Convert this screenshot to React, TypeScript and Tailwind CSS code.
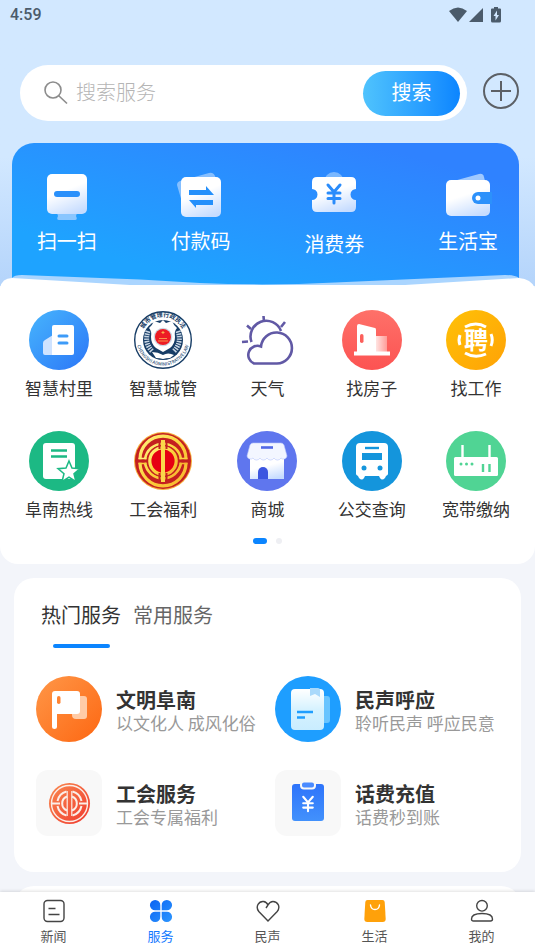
import React from 'react';

type IconProps = { className?: string };

function Yuan({ color, width = 3 }: { color: string; width?: number }) {
  return (
    <path
      d="M-6 -9 L0 -2 L6 -9 M0 -2 V9 M-6 -1 H6 M-6 4.5 H6"
      fill="none"
      stroke={color}
      strokeWidth={width}
      strokeLinecap="round"
    />
  );
}

function Gradients() {
  return (
    <svg className="absolute size-0" aria-hidden="true">
      <defs>
        <linearGradient id="paper" x1="0.3" y1="0" x2="0.7" y2="1">
          <stop offset="0.4" stopColor="#fff" />
          <stop offset="1" stopColor="#c6dcff" />
        </linearGradient>
        <linearGradient id="village" x1="0" y1="0" x2="1" y2="1">
          <stop stopColor="#47b5fd" />
          <stop offset="1" stopColor="#2b76f7" />
        </linearGradient>
        <linearGradient id="coral" x1="0" y1="0" x2="0" y2="1">
          <stop stopColor="#fe7169" />
          <stop offset="1" stopColor="#fc5352" />
        </linearGradient>
        <linearGradient id="amber" x1="0" y1="0" x2="1" y2="1">
          <stop stopColor="#ffc107" />
          <stop offset="1" stopColor="#ffa206" />
        </linearGradient>
        <linearGradient id="flag" x1="0" y1="0" x2="1" y2="1">
          <stop stopColor="#ff9748" />
          <stop offset="1" stopColor="#fd6712" />
        </linearGradient>
        <linearGradient id="note" x1="0" y1="0" x2="0" y2="1">
          <stop stopColor="#fff" />
          <stop offset="0.5" stopColor="#d6f2ff" />
          <stop offset="1" stopColor="#c9edff" />
        </linearGradient>
        <linearGradient id="gold" x1="0" y1="0" x2="1" y2="1">
          <stop stopColor="#fff27c" />
          <stop offset="0.5" stopColor="#fbd23c" />
          <stop offset="1" stopColor="#f7b52f" />
        </linearGradient>
        <linearGradient id="vermilion" x1="0" y1="0" x2="1" y2="1">
          <stop stopColor="#f98a4f" />
          <stop offset="1" stopColor="#f0392f" />
        </linearGradient>
        <linearGradient id="clip" x1="0" y1="0" x2="0" y2="1">
          <stop stopColor="#2e74fb" />
          <stop offset="1" stopColor="#4291fc" />
        </linearGradient>
        <linearGradient id="clover" x1="0" y1="0" x2="1" y2="1">
          <stop stopColor="#0a63f3" />
          <stop offset="1" stopColor="#2d96ff" />
        </linearGradient>
        <linearGradient id="annex" x1="0" y1="0" x2="1" y2="0">
          <stop stopColor="#ffe4e2" />
          <stop offset="1" stopColor="#ff9c98" />
        </linearGradient>
      </defs>
    </svg>
  );
}

function ScanIcon({ className }: IconProps) {
  return (
    <svg className={className} viewBox="0 0 48 52" aria-hidden="true">
      <path d="M14 43h20l-1 3q2 4-1 4H16q-3 0-1-4z" fill="#a5cfff" opacity=".8" />
      <rect x="4" y="4" width="40" height="40" rx="5" fill="url(#paper)" />
      <rect x="11" y="21" width="26" height="6" rx="3" fill="#2a90fb" />
    </svg>
  );
}

function PayIcon({ className }: IconProps) {
  return (
    <svg className={className} viewBox="0 0 48 52" aria-hidden="true">
      <path d="M3 11 L32 3 q4-1 6 3 l4 10-32 26q-3 0-3-3L0 15q0-3 3-4z" fill="#9dcaff" opacity=".8" />
      <rect x="4" y="7" width="40" height="40" rx="5" fill="url(#paper)" />
      <path d="M12 20h17v-4l8 9H12zM36 30H12l7 8v-3h17z" fill="#2590fb" />
    </svg>
  );
}

function TicketIcon({ className }: IconProps) {
  return (
    <svg className={className} viewBox="0 0 48 55" aria-hidden="true">
      <circle cx="24" cy="12" r="10" fill="#8fc3ff" opacity=".8" />
      <path
        d="M7 7h34q5 0 5 5v7a5 5 0 0 0 0 11v7q0 5-5 5H7q-5 0-5-5v-7a5 5 0 0 0 0-11v-7q0-5 5-5z"
        fill="url(#paper)"
      />
      <g transform="translate(24 24)">
        <Yuan color="#2a8cfb" />
      </g>
    </svg>
  );
}

function WalletIcon({ className }: IconProps) {
  return (
    <svg className={className} viewBox="0 0 48 52" aria-hidden="true">
      <path d="M6 12 35 4q4-1 5 3l2 8z" fill="#acd0ff" opacity=".9" />
      <rect x="2" y="10" width="44" height="36" rx="5" fill="url(#paper)" />
      <path d="M48 22H34a6 6 0 0 0 0 12h14z" fill="#2c91fb" />
      <circle cx="34" cy="28" r="2.500" fill="#fff" />
    </svg>
  );
}

function VillageIcon({ className }: IconProps) {
  return (
    <svg className={className} viewBox="0 0 60 60" aria-hidden="true">
      <circle cx="30" cy="30" r="30" fill="url(#village)" />
      <path d="M14 33q0-2 2-3l8-5v20h-8q-2 0-2-2z" fill="#cfe3ff" />
      <path d="M23 17q0-2 2-2h18q2 0 2 2v26q0 2-2 2H23z" fill="#fff" />
      <path d="M30 26h8M30 33h8" stroke="#3d9bf8" strokeWidth="3" strokeLinecap="round" />
    </svg>
  );
}

function CityEmblem({ className }: IconProps) {
  return (
    <svg className={className} viewBox="0 0 60 60" aria-hidden="true">
      <defs>
        <path id="ring-top" d="M9 33a21.500 21.500 0 1 1 42 0" />
        <path id="ring-bottom" d="M4 24a26.500 26.500 0 1 0 52 0" />
      </defs>
      <circle cx="30" cy="30" r="28.300" fill="#fff" stroke="#173d66" strokeWidth="1.400" />
      <circle cx="30" cy="30" r="20" fill="#173d66" />
      <text fontSize="6" fontWeight="700" fill="#173d66">
        <textPath href="#ring-top" startOffset="50%" textAnchor="middle">城市管理行政执法</textPath>
      </text>
      <text fontSize="4.500" fontWeight="500" fill="#31547a">
        <textPath href="#ring-bottom" startOffset="50%" textAnchor="middle">
          CHENGSHI ADMINISTRATIVE LAW
        </textPath>
      </text>
      <path
        d="M15 21q-4 12 4 20M45 21q4 12-4 20"
        fill="none"
        stroke="#c9d6e4"
        strokeWidth="5"
        strokeDasharray="1.500 1"
      />
      <path
        d="M30 10l3 3 6-2q2 5 5 7-3 3-2 9 0 7-5 11l-7 4-7-4q-5-4-5-11 1-6-2-9 3-2 5-7l6 2z"
        fill="#fff"
      />
      <circle cx="30" cy="27" r="9.300" fill="#ccd7e3" />
      <circle cx="30" cy="27" r="8" fill="#ed1c24" />
      <path d="M26 28.500h8M25 31h10" stroke="#f8944a" strokeWidth="1" />
      <path d="M30 21v3M28.500 22.500h3" stroke="#f8b04a" strokeWidth="1" />
      <path d="M19 42q6 0 11 3 5-3 11 0l-4 3q-4 0-7 1-3-1-7-1z" fill="#fff" />
    </svg>
  );
}

function WeatherIcon({ className }: IconProps) {
  return (
    <svg className={className} viewBox="0 0 60 60" aria-hidden="true">
      <g fill="none" stroke="#6159a5" strokeWidth="2.600">
        <path d="M14.500 32a15.500 15.500 0 0 1 29.500-11" />
        <path d="M17 53.500a9 9 0 1 1 7-17A15.500 15.500 0 1 1 40 53.500z" />
        <path d="M26.500 6l.5 6M10 15.500l4 3.500M48 12l-4 5M5 32l6-.5" />
      </g>
    </svg>
  );
}

function HouseIcon({ className }: IconProps) {
  return (
    <svg className={className} viewBox="0 0 60 60" aria-hidden="true">
      <circle cx="30" cy="30" r="30" fill="url(#coral)" />
      <path d="M34 26h11v17H34z" fill="url(#annex)" />
      <path d="M15 16q0-2 2-2l16 4q1 0 1 2v22H15z" fill="#fff" />
      <rect x="18" y="24" width="3.500" height="9" rx="1.750" fill="#fc5f5b" />
      <path d="M12 43.500h36" stroke="#fff" strokeWidth="4" />
    </svg>
  );
}

function JobIcon({ className }: IconProps) {
  return (
    <svg className={className} viewBox="0 0 60 60" aria-hidden="true">
      <circle cx="30" cy="30" r="30" fill="url(#amber)" />
      <g fill="none" stroke="#fff" strokeWidth="3">
        <path d="M19 17q11-6 21 0M19 43q10 6 21 1M14 25q-2 5 0 10M45 24q2.500 6 0 12" />
      </g>
      <text x="30" y="38.500" fontSize="24" fontWeight="700" fill="#fff" textAnchor="middle">聘</text>
    </svg>
  );
}

function HotlineIcon({ className }: IconProps) {
  return (
    <svg className={className} viewBox="0 0 60 60" aria-hidden="true">
      <circle cx="30" cy="30" r="30" fill="#1cb984" />
      <rect x="14" y="12" width="32" height="36" rx="3" fill="#fff" />
      <path d="M22 19.500h16M22 25.500h16" stroke="#1cb984" strokeWidth="2.600" />
      <path
        d="M40 30l3 7 8 .7-6 5 2 8-7-4.500-7 4.500 2-8-6-5 8-.7z"
        fill="#fff"
        stroke="#1cb984"
        strokeWidth="1.500"
      />
    </svg>
  );
}

function UnionEmblem({ className }: IconProps) {
  return (
    <svg className={className} viewBox="0 0 60 60" aria-hidden="true">
      <circle cx="30" cy="30" r="29" fill="#f6ad3b" />
      <circle cx="30" cy="30" r="28" fill="#c42020" />
      <g fill="none" stroke="url(#gold)">
        <path d="M7 28.200a23 23 0 0 1 46 0M7 31.800a23 23 0 0 0 46 0" strokeWidth="3.200" />
        <path d="M12 28.200a18.200 18.200 0 0 1 36 0M12 31.800a18.200 18.200 0 0 0 36 0" strokeWidth="2.600" />
        <path d="M5.500 27.500h8M46.500 27.500h8M5.500 32.500h8M46.500 32.500h8" strokeWidth="1.600" />
      </g>
      <circle cx="30" cy="30" r="16" fill="#c42020" />
      <circle cx="30" cy="30" r="13.200" fill="#e60012" stroke="url(#gold)" strokeWidth="3.200" />
      <path d="M26.500 10v8M33.500 10v8M26.500 42v8M33.500 42v8" stroke="#c42020" strokeWidth="2" />
      <rect x="28" y="9" width="4" height="42" fill="#fbd84a" />
    </svg>
  );
}

function ShopIcon({ className }: IconProps) {
  return (
    <svg className={className} viewBox="0 0 60 60" aria-hidden="true">
      <circle cx="30" cy="30" r="30" fill="#5f76ee" />
      <path d="M13 26h34v22H13z" fill="url(#paper)" />
      <path
        d="M16 12h28q2 0 3 2l3 11a3.500 3.500 0 0 1-6 2 4 4 0 0 1-7 0 4 4 0 0 1-7 0 4 4 0 0 1-7 0 4 4 0 0 1-7 0 3.500 3.500 0 0 1-6-2l3-11q1-2 3-2z"
        fill="#f3f6ff"
        stroke="#b9c6fb"
        strokeWidth=".6"
      />
      <path d="M24 16.500h12" stroke="#5168e6" strokeWidth="2.600" />
      <path d="M21 48v-7a5 5 0 0 1 10 0v7z" fill="#3c56e0" />
    </svg>
  );
}

function BusIcon({ className }: IconProps) {
  return (
    <svg className={className} viewBox="0 0 60 60" aria-hidden="true">
      <circle cx="30" cy="30" r="30" fill="#1495dc" />
      <path
        d="M18 12h24q4 0 4 4v27q0 1-2 2l-1 2q-3 3-5 0l-1-2H23l-1 2q-2 3-5 0l-1-2q-2-1-2-2V16q0-4 4-4z"
        fill="#fff"
      />
      <path d="M23 17h14" stroke="#1495dc" strokeWidth="2.400" />
      <path d="M20 22h20v7H20z" fill="#1495dc" />
      <circle cx="22" cy="37" r="2.500" fill="#1495dc" />
      <circle cx="38" cy="37" r="2.500" fill="#1495dc" />
    </svg>
  );
}

function RouterIcon({ className }: IconProps) {
  return (
    <svg className={className} viewBox="0 0 60 60" aria-hidden="true">
      <circle cx="30" cy="30" r="30" fill="#50d494" />
      <path d="M16.500 14v13M43.500 14v13" stroke="#fff" strokeWidth="2.400" />
      <rect x="8" y="26" width="44" height="19" rx="1.500" fill="#fff" />
      <circle cx="15" cy="33" r="1.500" fill="#50d494" />
      <circle cx="20.500" cy="33" r="1.500" fill="#50d494" />
      <circle cx="26" cy="33" r="1.500" fill="#50d494" />
      <path d="M37 33v8M43.500 33v8" stroke="#50d494" strokeWidth="2.400" />
    </svg>
  );
}

function FlagIcon({ className }: IconProps) {
  return (
    <svg className={className} viewBox="0 0 66 66" aria-hidden="true">
      <circle cx="33" cy="33" r="33" fill="url(#flag)" />
      <path d="M36 20h12q3 0 3 3v17q0 3-3 3H40q-4 0-4-4z" fill="#ffcba6" />
      <path d="M16 18q0-3 3-3h22q3 0 3 3v17q0 3-3 3H21v13q0 2-2.500 2T16 51z" fill="#fff" />
      <rect x="21" y="20" width="3.500" height="8" rx="1.750" fill="#ff8433" />
    </svg>
  );
}

function VoiceIcon({ className }: IconProps) {
  return (
    <svg className={className} viewBox="0 0 66 66" aria-hidden="true">
      <circle cx="33" cy="33" r="33" fill="#1e9eff" />
      <path d="M44 20h8q3 0 3 3v21q0 3-3 3h-8z" fill="#68c4ff" />
      <rect x="16" y="13" width="33" height="41" rx="4" fill="url(#note)" />
      <path d="M35 12h8q2 0 2 2v7l-5-3-5 2z" fill="#a9d9fb" />
      <path d="M22 36h16M22 41.500h8" stroke="#1e9eff" strokeWidth="2.400" />
    </svg>
  );
}

function UnionTile({ className }: IconProps) {
  return (
    <svg className={className} viewBox="0 0 66 66" aria-hidden="true">
      <rect width="66" height="66" rx="12" fill="#f8f8f8" />
      <circle cx="33.500" cy="33.500" r="20.500" fill="url(#vermilion)" />
      <g fill="none" stroke="#fbeee8">
        <circle cx="33.500" cy="33.500" r="18" strokeWidth="1.400" />
        <path d="M21.500 31a12.500 12.500 0 0 1 9-9.500M36.500 21.500a12.500 12.500 0 0 1 9 9.500M21.500 36a12.500 12.500 0 0 0 9 9.500M36.500 45.500a12.500 12.500 0 0 0 9-9.500" strokeWidth="2" />
        <path d="M15 33.500h9M43 33.500h9" strokeWidth="1.800" />
        <path d="M31 26.500a7.500 7.500 0 0 0 0 14M36 26.500a7.500 7.500 0 0 1 0 14" strokeWidth="2" />
        <path d="M31.200 21v25M35.800 21v25" strokeWidth="1.200" />
      </g>
    </svg>
  );
}

function TopUpTile({ className }: IconProps) {
  return (
    <svg className={className} viewBox="0 0 66 66" aria-hidden="true">
      <rect width="66" height="66" rx="12" fill="#f8f8f8" />
      <rect x="17" y="14" width="32" height="37" rx="3" fill="url(#clip)" />
      <rect x="26" y="11.500" width="14" height="7" rx="3" fill="#4a8bff" stroke="#f8f8f8" strokeWidth="2" />
      <g transform="translate(33 34) scale(.8)">
        <Yuan color="#fff" width={2.6} />
      </g>
    </svg>
  );
}

function NewsIcon({ className }: IconProps) {
  return (
    <svg className={className} viewBox="0 0 24 24" fill="none" stroke="#444" strokeWidth="1.400" aria-hidden="true">
      <rect x="2" y="1.500" width="20" height="21" rx="3.500" />
      <path d="M6.500 9.500h7M6.500 15.500h11" />
    </svg>
  );
}

function CloverIcon({ className }: IconProps) {
  return (
    <svg className={className} viewBox="0 0 24 24" fill="url(#clover)" aria-hidden="true">
      <path d="M11.300 11.300H6.500a5.200 5.200 0 1 1 4.800-4.800zM12.700 11.300V6.500a5.200 5.200 0 1 1 4.800 4.800zM11.300 12.700v4.800a5.200 5.200 0 1 1-4.800-4.800zM12.700 12.700h4.800a5.200 5.200 0 1 1-4.800 4.800z" />
    </svg>
  );
}

function HeartIcon({ className }: IconProps) {
  return (
    <svg className={className} viewBox="0 0 24 24" fill="none" stroke="#444" strokeWidth="1.400" aria-hidden="true">
      <path d="M12 22 2.800 12.500C-1 7.500 3 2 7.500 2.500q3 .3 4.500 3.500 2-3.500 5-3.500c4.500 0 8 5 4.200 10zM12 6l-2 3" />
    </svg>
  );
}

function BagIcon({ className }: IconProps) {
  return (
    <svg className={className} viewBox="0 0 24 24" aria-hidden="true">
      <path d="M4.500 1h15q2 0 2.200 2l1 17q0 3-3 3H4.300q-3 0-3-3l1-17q.2-2 2.200-2z" fill="#ffa10a" />
      <path d="M7.500 6q.5 4.500 4.500 4.500T16.500 6" fill="none" stroke="#fff" strokeWidth="1.400" strokeLinecap="round" />
    </svg>
  );
}

function PersonIcon({ className }: IconProps) {
  return (
    <svg className={className} viewBox="0 0 24 24" fill="none" stroke="#444" strokeWidth="1.400" aria-hidden="true">
      <circle cx="12" cy="6.800" r="5.300" />
      <path d="M1.500 20c0-4 4.500-5.500 10.500-5.500S22.500 16 22.500 20q0 2-2 2h-17q-2 0-2-2z" />
    </svg>
  );
}

const shortcuts = [
  { label: '扫一扫', Icon: ScanIcon, size: 'h-[52px]' },
  { label: '付款码', Icon: PayIcon, size: 'h-[52px]' },
  { label: '消费券', Icon: TicketIcon, size: 'h-[55px]' },
  { label: '生活宝', Icon: WalletIcon, size: 'h-[52px]' },
];

const services = [
  { label: '智慧村里', Icon: VillageIcon },
  { label: '智慧城管', Icon: CityEmblem },
  { label: '天气', Icon: WeatherIcon },
  { label: '找房子', Icon: HouseIcon },
  { label: '找工作', Icon: JobIcon },
  { label: '阜南热线', Icon: HotlineIcon },
  { label: '工会福利', Icon: UnionEmblem },
  { label: '商城', Icon: ShopIcon },
  { label: '公交查询', Icon: BusIcon },
  { label: '宽带缴纳', Icon: RouterIcon },
];

const popular = [
  { title: '文明阜南', note: '以文化人 成风化俗', Icon: FlagIcon },
  { title: '民声呼应', note: '聆听民声 呼应民意', Icon: VoiceIcon },
  { title: '工会服务', note: '工会专属福利', Icon: UnionTile },
  { title: '话费充值', note: '话费秒到账', Icon: TopUpTile },
];

const tabs = [
  { label: '新闻', Icon: NewsIcon },
  { label: '服务', Icon: CloverIcon, active: true },
  { label: '民声', Icon: HeartIcon },
  { label: '生活', Icon: BagIcon },
  { label: '我的', Icon: PersonIcon },
];

function StatusBar() {
  return (
    <div className="flex h-[30px] items-center justify-between pr-8 pl-[10px] text-[#4b5b6b]">
      <span className="font-['Roboto',sans-serif] text-base font-medium">4:59</span>
      <svg className="h-4 w-[54px]" viewBox="0 0 54 16" fill="currentColor" aria-hidden="true">
        <path d="M0 4Q9 -3 18 4L9 15z" />
        <path d="M34 1v14H20z" />
        <path d="M45 0h4v1.500h2q1 0 1 1V14q0 1.500-1.500 1.500h-7Q42 15.500 42 14V2.500q0-1 1-1h2z" />
        <path d="M48 3.500 44.500 9H46.500v4.500L50 8h-2z" fill="#d2e8ff" />
      </svg>
    </div>
  );
}

function SearchRow() {
  return (
    <div className="mt-[35px] flex items-center gap-4 pr-4 pl-5">
      <form
        className="flex h-14 min-w-0 flex-1 items-center rounded-full bg-white pr-[7px] pl-6"
        onSubmit={(e) => e.preventDefault()}
      >
        <svg className="size-6 shrink-0" viewBox="0 0 24 24" fill="none" stroke="#8c8c8c" strokeWidth="1.600" aria-hidden="true">
          <circle cx="9" cy="9" r="8" />
          <path d="M14.500 14.500 23 22.500" />
        </svg>
        <input
          type="search"
          aria-label="搜索服务"
          placeholder="搜索服务"
          className="ml-2 h-9 min-w-0 flex-1 bg-transparent pb-1 text-xl font-light outline-none placeholder:text-[#b5b5b5]"
        />
        <button
          type="submit"
          className="h-[45px] w-[97px] rounded-full bg-linear-to-r from-[#4fc3fd] to-[#0b85ff] pb-[2px] text-xl text-white"
        >
          搜索
        </button>
      </form>
      <button type="button" aria-label="添加" className="-mt-1 shrink-0">
        <svg className="size-9" viewBox="0 0 36 36" fill="none" stroke="#5c6066" strokeWidth="2" aria-hidden="true">
          <circle cx="18" cy="18" r="17" />
          <path d="M18 8v20M8 18h20" />
        </svg>
      </button>
    </div>
  );
}

function Shortcuts() {
  return (
    <div className="mt-[22px] mr-4 ml-3 h-[143px] rounded-t-[22px] bg-linear-to-tr from-[#1ea3ff] from-20% to-[#2f82ff] to-85% pt-[27px]">
      <div className="-mr-4 -ml-3 grid grid-cols-4">
        {shortcuts.map(({ label, Icon, size }) => (
          <button key={label} type="button" className="flex flex-col items-center self-start">
            <Icon className={`${size} w-12`} />
            <span className="mt-1 text-xl leading-[30px] text-white">{label}</span>
          </button>
        ))}
      </div>
    </div>
  );
}

function Services() {
  return (
    <section className="-mt-[11px]">
      <svg className="relative block h-[13px] w-full" viewBox="0 0 535 13" preserveAspectRatio="none" aria-hidden="true">
        <path d="M12 3Q14 0 22 0L140 4.500 200 8q67 3 135-.5L505 0q10 0 14 3V13H12z" fill="#aad5ff" />
        <path d="M0 13Q2 3 12 3L130 10h275L519 3q12 1 16 10z" fill="#fff" />
      </svg>
      <div className="rounded-b-[18px] bg-white px-[7px] pt-[22px] pb-5">
        <div className="grid grid-cols-5 gap-y-[31px]">
          {services.map(({ label, Icon }) => (
            <button key={label} type="button" className="flex flex-col items-center">
              <Icon className="size-[60px]" />
              <span className="mt-[6px] text-[17px] leading-6 text-[#333]">{label}</span>
            </button>
          ))}
        </div>
        <div className="mt-[17px] flex items-center justify-center gap-[9px]">
          <span className="h-[6px] w-[14px] rounded-full bg-[#0b85ff]" />
          <span className="size-[6px] rounded-full bg-[#eeeff3]" />
        </div>
      </div>
    </section>
  );
}

function Popular() {
  return (
    <section className="mx-[14px] mt-[14px] rounded-[20px] bg-white pt-5 pr-[7px] pb-9 pl-[22px]">
      <div className="flex gap-3 pl-[5px] text-xl leading-[34px]" role="tablist">
        <button type="button" role="tab" aria-selected="true" className="flex flex-col items-center text-[#333]">
          热门服务
          <span className="mt-3 h-1 w-[57px] rounded-full bg-[#0b85ff]" />
        </button>
        <button type="button" role="tab" aria-selected="false" className="self-start text-[#666]">
          常用服务
        </button>
      </div>
      <div className="mt-7 grid grid-cols-2 gap-y-7">
        {popular.map(({ title, note, Icon }) => (
          <button key={title} type="button" className="flex items-center gap-[14px] text-left">
            <Icon className="size-[66px] shrink-0" />
            <span className="flex flex-col pt-1 whitespace-nowrap">
              <strong className="text-xl leading-6 font-bold text-[#333]">{title}</strong>
              <span className="text-[17px] leading-[22px] text-[#999]">{note}</span>
            </span>
          </button>
        ))}
      </div>
    </section>
  );
}

function TabBar() {
  return (
    <nav className="relative grid shrink-0 grid-cols-5 bg-white pt-[7px] pb-[5px] shadow-[0_-1px_3px_rgba(0,0,0,0.12)]">
      {tabs.map(({ label, Icon, active }) => (
        <button
          key={label}
          type="button"
          className={`flex flex-col items-center text-[13px] leading-5 ${active ? 'text-[#1479ff]' : 'text-[#555]'}`}
        >
          <Icon className="mb-[3px] size-6" />
          {label}
        </button>
      ))}
    </nav>
  );
}

export default function App() {
  return (
    <div className="relative flex h-screen flex-col overflow-hidden bg-[#f3f5fa] font-['Noto_Sans_CJK_SC',sans-serif]">
      <Gradients />
      <main className="min-h-0 flex-1 overflow-hidden">
        <header className="bg-linear-to-b from-[#d2e8ff] from-55% to-[#b4d4fb]">
          <StatusBar />
          <SearchRow />
          <Shortcuts />
        </header>
        <Services />
        <Popular />
        <section className="mx-[14px] mt-[14px] h-40 rounded-[20px] bg-white" />
      </main>
      <TabBar />
    </div>
  );
}
